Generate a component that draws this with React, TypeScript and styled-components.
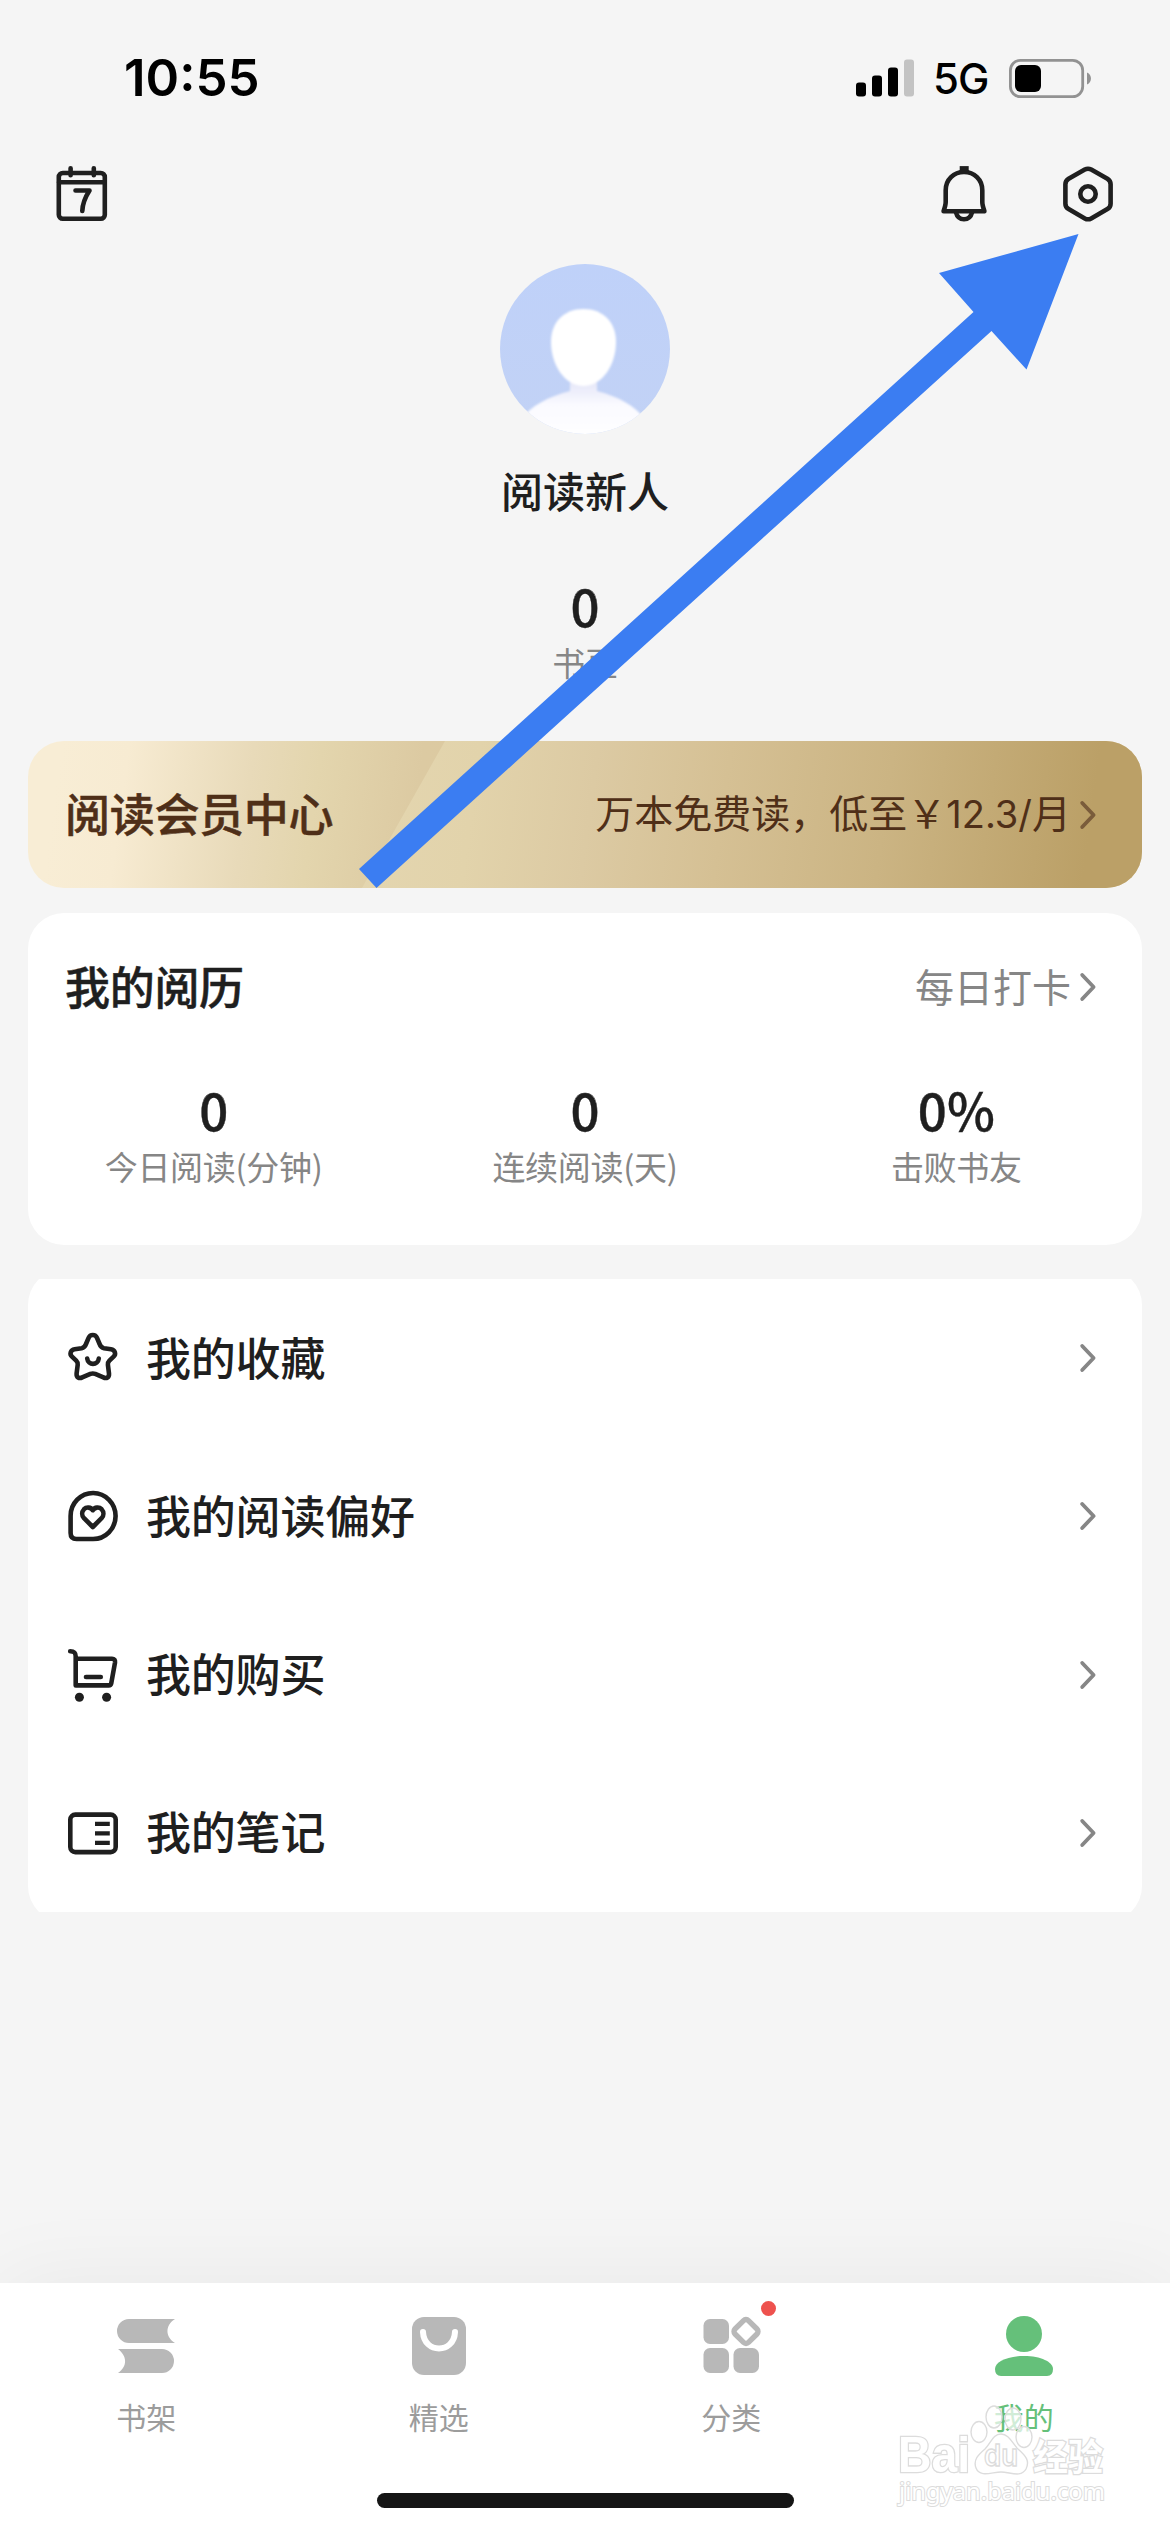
import React from 'react';
import styled, { createGlobalStyle } from 'styled-components';

const Global = createGlobalStyle`
  body { margin: 0; background: #f5f5f5; }
  * { box-sizing: border-box; }
`;

const INK = '#1f1f1f';

const Screen = styled.div`
  position: relative;
  width: 1170px;
  height: 2532px;
  overflow: hidden;
  display: flex;
  flex-direction: column;
  background: #f5f5f5;
  color: ${INK};
  font-family: 'Noto Sans CJK SC', sans-serif;
`;

const Svg = styled.svg`
  display: block;
  flex: none;
  overflow: visible;
`;

const StatusBar = styled.header`
  height: 156px;
  padding: 0 78px 0 124px;
  display: flex;
  align-items: center;
  justify-content: space-between;
  font-family: Inter, sans-serif;
  color: #000;
`;

const Clock = styled.time`
  font-size: 51px;
  font-weight: 600;
  line-height: 60px;
`;

const StatusGroup = styled.div`
  display: flex;
  align-items: center;
`;

const Network = styled.span`
  margin: 2px 20px 0 19px;
  width: 56px;
  font-size: 42px;
  font-weight: 500;
  line-height: 50px;
  letter-spacing: -1px;
`;

const Toolbar = styled.nav`
  height: 108px;
  padding: 10px 57px 0 56px;
  display: flex;
  justify-content: space-between;
`;

const ToolGroup = styled.div`
  display: flex;
  gap: 76px;
`;

const Profile = styled.section`
  height: 477px;
  display: flex;
  flex-direction: column;
  align-items: center;
`;

const Name = styled.h1`
  margin: 26px 0 0;
  font-size: 42px;
  font-weight: 500;
  line-height: 60px;
`;

const Stat = styled.div<{ $top?: number }>`
  margin-top: ${(p) => p.$top ?? 0}px;
  display: flex;
  flex-direction: column;
  align-items: center;
`;

const StatValue = styled.div`
  margin-bottom: 6px;
  font-size: 51px;
  font-weight: 500;
  line-height: 54px;
  -webkit-text-stroke: 0.4px currentColor;
`;

const StatLabel = styled.div`
  font-size: 33px;
  font-weight: 400;
  line-height: 48px;
  letter-spacing: -0.3px;
  color: #868686;
`;

const Banner = styled.section`
  position: relative;
  height: 147px;
  margin: 0 28px;
  padding: 0 46px 0 37px;
  border-radius: 36px;
  overflow: hidden;
  display: flex;
  align-items: center;
  justify-content: space-between;
  color: #4f2f18;
  background: linear-gradient(98deg, #f8edd5 3%, #f7ebd2 9%, #e8dab9 20%, #e3d5ad 26%, #dccaa2 35%, #dcc99f 42%);
`;

const BannerSheen = styled(Svg)`
  position: absolute;
  left: 0;
  top: 0;
`;

const SectionTitle = styled.h2`
  position: relative;
  margin: 0;
  padding-bottom: 3px;
  font-size: 45px;
  font-weight: 500;
  line-height: 60px;
  letter-spacing: -0.3px;
  -webkit-text-stroke: 0.5px currentColor;
`;

const More = styled.div<{ $color: string }>`
  position: relative;
  display: flex;
  align-items: center;
  gap: 9px;
  font-size: 39px;
  font-weight: 400;
  line-height: 56px;
  color: ${(p) => p.$color};
`;

const MoreText = styled.span`
  padding-bottom: 4px;
`;

const Price = styled.span`
  font-family: Inter, sans-serif;
  font-size: 38px;
`;

const Card = styled.section`
  height: 332px;
  margin: 25px 28px 34px;
  padding: 44px 46px 0 37px;
  border-radius: 36px;
  background: #fff;
`;

const CardHead = styled.div`
  display: flex;
  align-items: center;
  justify-content: space-between;
  height: 60px;
`;

const Stats = styled.div`
  display: grid;
  grid-template-columns: repeat(3, 1fr);
  margin: 65px -46px 0 -37px;
`;

const MenuClip = styled.div`
  height: 633px;
  margin: 0 28px;
  overflow: hidden;
`;

const Menu = styled.ul`
  list-style: none;
  margin: -10px 0;
  padding: 10px 0;
  border-radius: 36px;
  background: #fff;
`;

const MenuItem = styled.li`
  height: 158.25px;
  padding: 0 46px 0 39px;
  display: flex;
  align-items: center;
  gap: 26px;
`;

const MenuLabel = styled.span`
  flex: 1;
  padding-bottom: 3px;
  font-size: 45px;
  font-weight: 500;
  line-height: 60px;
  letter-spacing: -0.2px;
`;

const TabBar = styled.nav`
  position: relative;
  height: 249px;
  margin-top: auto;
  display: grid;
  grid-template-columns: repeat(4, 1fr);
  background: #fff;
  box-shadow: 0 0 90px rgba(0, 0, 0, 0.055);
`;

const Tab = styled.div<{ $active?: boolean }>`
  display: flex;
  flex-direction: column;
  align-items: center;
  padding-top: 30px;
  font-size: 30px;
  font-weight: 400;
  line-height: 44px;
  color: ${(p) => (p.$active ? '#65c07a' : '#9c9c9c')};
`;

const TabIcon = styled.div`
  position: relative;
  height: 81px;
`;

const Dot = styled.i`
  position: absolute;
  left: 60px;
  top: -12px;
  width: 15px;
  height: 15px;
  border-radius: 50%;
  background: #ee524e;
`;

const HomeBar = styled.div`
  position: absolute;
  left: 377px;
  bottom: 24px;
  width: 417px;
  height: 15px;
  border-radius: 8px;
  background: #151515;
`;

const Overlay = styled(Svg)`
  position: absolute;
  left: 0;
  top: 0;
  pointer-events: none;
`;

const Chevron = ({ color }: { color: string }) => (
  <Svg width="16" height="28" viewBox="0 0 16 28" fill="none" stroke={color} strokeWidth="3.8" strokeLinecap="round" strokeLinejoin="round">
    <path d="M2.200 2 L13.600 14 L2.200 26" />
  </Svg>
);

const line = { fill: 'none', stroke: INK, strokeWidth: 4.6, strokeLinecap: 'round', strokeLinejoin: 'round' } as const;

const CalendarIcon = () => (
  <Svg width="52" height="56" viewBox="0 0 52 56" {...line}>
    <rect x="2.8" y="7" width="46" height="45.8" rx="4" />
    <path d="M3 16.3H48.6M14.6 2.3V9.3M37.8 2.3V9.3" />
    <path d="M19.5 24.5H33.5C29 31.5 26.5 37.5 26.3 45" />
  </Svg>
);

const BellIcon = () => (
  <Svg width="46" height="56" viewBox="0 0 46 56" {...line}>
    <path d="M18.7 2.6H27.7" strokeLinecap="butt" strokeWidth="5" />
    <path d="M2.6 45.2C4 41 4.7 39 4.7 36V24.2C4.7 13.4 12.8 6 23 6C33.2 6 41.3 13.4 41.3 24.2V36C41.3 39 42 41 43.4 45.2Z" />
    <path d="M15 46.5C16 50.6 19 53.2 23 53.2C27 53.2 30 50.6 31 46.5" />
  </Svg>
);

const HexIcon = () => (
  <Svg width="50" height="56" viewBox="0 0 50 56" {...line}>
    <path d="M21.8 3.6Q25 1.8 28.2 3.6L44.4 12.8Q47.6 14.8 47.6 18.3V37.7Q47.6 41.2 44.4 43.1L28.2 52.4Q25 54.2 21.8 52.4L5.6 43.1Q2.4 41.2 2.4 37.7V18.3Q2.4 14.8 5.6 12.8Z" />
    <circle cx="25" cy="28" r="7.7" />
  </Svg>
);

const StarIcon = () => (
  <Svg width="53" height="56" viewBox="0 0 53 56" {...line}>
    <path d="M21.6 7.8C23.2 4 28.4 4 30 7.8L32.6 14Q33.8 17.6 37 18.2L44 19.2C48 19.8 49.4 24 46.6 26.6L42.4 30.6Q40.6 32.4 40.9 34.8L42 43.6C42.3 47.3 39.5 49 36.4 47.4L28.2 43.9Q25.8 43 23.4 43.9L15.2 47.4C12.1 49 9.3 47.3 9.6 43.6L10.7 34.8Q11 32.4 9.2 30.6L5 26.6C2.2 24 3.6 19.8 7.6 19.2L14.6 18.2Q17.8 17.6 19 14Z" />
    <path d="M20.2 28.6C21 35.6 31 35.6 31.8 28.600" />
  </Svg>
);

const HeartIcon = () => (
  <Svg width="53" height="56" viewBox="0 0 53 56" {...line}>
    <path d="M3.6 28A22.500 23 0 1 1 26 51H9.5Q3.6 51 3.600 45Z" />
    <path d="M25.800 22.2C23.800 19 19.4 18.8 17 21.200C14.6 23.8 14.6 27.6 17 30.2L25.800 39L34.600 30.2C37 27.6 37 23.8 34.600 21.200C32.200 18.8 27.800 19 25.800 22.2Z" />
  </Svg>
);

const CartIcon = () => (
  <Svg width="53" height="56" viewBox="0 0 53 56" {...line}>
    <path d="M3.2 4.200C7 4.200 8.7 5.6 8.700 9.6V38.400H41.800Q43.800 38.400 44.200 36.6L48 15.6Q48.4 11.700 45 11.700H9" />
    <path d="M19 30H33.8" />
    <g fill={INK} stroke="none">
      <circle cx="12.4" cy="50.2" r="4.5" />
      <circle cx="39.600" cy="50.2" r="4.5" />
    </g>
  </Svg>
);

const NoteIcon = () => (
  <Svg width="53" height="56" viewBox="0 0 53 56" {...line}>
    <rect x="3.300" y="9.600" width="45.400" height="37.500" rx="5" />
    <path d="M28 18.900H42.800M28 28.400H42.800M28 37.900H42.800" strokeWidth="4.2" strokeLinecap="butt" />
  </Svg>
);

const BooksIcon = () => (
  <Svg width="60" height="60" viewBox="0 0 60 60" fill="#b8b8b8">
    <path d="M13 6H59C49 12 49 24 59 30H13A12 12 0 0 1 13 6Z" />
    <path d="M2 36H46A12 12 0 0 1 46 60H2C12 53 11 43 2 36Z" />
  </Svg>
);

const BagIcon = () => (
  <Svg width="60" height="60" viewBox="0 0 60 60">
    <rect x="3" y="4" width="54" height="58" rx="12" fill="#b8b8b8" />
    <path d="M14 19C15 41 45 41 46 19" fill="none" stroke="#fff" strokeWidth="6" strokeLinecap="round" />
  </Svg>
);

const GridIcon = () => (
  <Svg width="60" height="60" viewBox="0 0 60 60" fill="#b8b8b8">
    <rect x="2.5" y="6" width="25.5" height="25" rx="6.5" />
    <rect x="2.5" y="35" width="25.5" height="25" rx="6.5" />
    <rect x="32.5" y="35" width="25.5" height="25" rx="6.5" />
    <rect x="35.5" y="9" width="19" height="19" rx="3.5" transform="rotate(45 45 18.5)" fill="none" stroke="#b8b8b8" strokeWidth="5.4" />
  </Svg>
);

const PersonIcon = () => (
  <Svg width="60" height="60" viewBox="0 0 60 60" fill="#65c07a">
    <circle cx="30" cy="21" r="18" />
    <path d="M1 56C1 49 13 43 30 43C47 43 59 49 59 56Q59 63 53 63H7Q1 63 1 56Z" />
  </Svg>
);

const Avatar = () => (
  <Svg width="170" height="170" viewBox="0 0 170 170">
    <defs>
      <clipPath id="avatarClip"><circle cx="85" cy="85" r="85" /></clipPath>
      <linearGradient id="body" x1="0" y1="0" x2="0" y2="1">
        <stop offset="0" stopColor="#dfe1f6" />
        <stop offset="0.45" stopColor="#fafaff" />
        <stop offset="1" stopColor="#fff" />
      </linearGradient>
      <linearGradient id="sky" x1="0" y1="0" x2="0" y2="1">
        <stop offset="0" stopColor="#bfd1f9" />
        <stop offset="1" stopColor="#c2d2f5" />
      </linearGradient>
      <filter id="soft"><feGaussianBlur stdDeviation="1" /></filter>
    </defs>
    <g clipPath="url(#avatarClip)">
      <rect width="170" height="170" fill="url(#sky)" />
      <g filter="url(#soft)">
        <path d="M20 156C32 141 48 133 70 127V112H97V127C119 133 134 141 146 156L150 175H16Z" fill="url(#body)" />
        <path d="M83.500 45C103 45 116 58 116 78C116 101 102 122 83.500 122C65 122 51 101 51 78C51 58 64 45 83.500 45Z" fill="#fff" />
      </g>
    </g>
  </Svg>
);

const menu = [
  { icon: <StarIcon />, label: '我的收藏' },
  { icon: <HeartIcon />, label: '我的阅读偏好' },
  { icon: <CartIcon />, label: '我的购买' },
  { icon: <NoteIcon />, label: '我的笔记' },
];

const stats = [
  { value: '0', label: '今日阅读(分钟)' },
  { value: '0', label: '连续阅读(天)' },
  { value: '0%', label: '击败书友' },
];

const tabs = [
  { icon: <BooksIcon />, label: '书架' },
  { icon: <BagIcon />, label: '精选' },
  { icon: <GridIcon />, label: '分类', dot: true },
  { icon: <PersonIcon />, label: '我的', active: true },
];

const Watermark = () => (
  <Svg width="216" height="110" viewBox="0 0 216 110" fill="#fff" fillOpacity="0.7" stroke="#dcdcdc" strokeWidth="1.4">
    <g fontFamily="'Liberation Sans', sans-serif" fontWeight="700" paintOrder="stroke" fillOpacity="1" strokeWidth="2.6">
      <text x="2" y="70" fontSize="50" textLength="72" lengthAdjust="spacingAndGlyphs">Bai</text>
      <text x="137" y="69" fontSize="37" fontFamily="'Noto Sans CJK SC', sans-serif" textLength="70" lengthAdjust="spacingAndGlyphs">经验</text>
    </g>
    <ellipse cx="83" cy="30" rx="8" ry="10.500" />
    <ellipse cx="98" cy="15" rx="8" ry="11" />
    <ellipse cx="117" cy="17" rx="8" ry="11" />
    <ellipse cx="128" cy="35" rx="8" ry="10.500" />
    <path d="M105 32C113 32 116 41 122 47C130 54 134 59 130 67C125 76 114 70 105 70C96 70 84 76 80 66C77 58 82 53 89 47C95 41 97 32 105 32Z" />
    <text x="88" y="64" fontSize="30" fontFamily="Inter, sans-serif" fontWeight="600" textLength="34" lengthAdjust="spacingAndGlyphs">du</text>
    <text x="3" y="98" fontSize="24" fontFamily="'Noto Sans', sans-serif" fontWeight="400" fillOpacity="1" paintOrder="stroke" strokeWidth="2" textLength="206" lengthAdjust="spacingAndGlyphs">jingyan.baidu.com</text>
  </Svg>
);

const WatermarkSlot = styled.aside`
  position: absolute;
  left: 896px;
  top: 2402px;
`;

export default function App() {
  return (
    <Screen>
      <Global />
      <StatusBar>
        <Clock>10:55</Clock>
        <StatusGroup>
          <Svg width="58" height="38" viewBox="0 0 58 38">
            <rect x="0" y="23.500" width="10" height="14" rx="3" />
            <rect x="16" y="16.500" width="10" height="21" rx="3" />
            <rect x="32" y="8.500" width="10" height="29" rx="3" />
            <rect x="48" y="0.500" width="10" height="37" rx="3" fill="#c3c3c3" />
          </Svg>
          <Network>5G</Network>
          <Svg width="83" height="39" viewBox="0 0 83 39">
            <rect x="1.400" y="1.400" width="72.300" height="36.200" rx="10" fill="none" stroke="#929292" strokeWidth="2.800" />
            <rect x="6" y="6" width="26" height="27" rx="6" />
            <path d="M78 13.500C83.300 15.500 83.300 23.500 78 25.500Z" fill="#929292" />
          </Svg>
        </StatusGroup>
      </StatusBar>

      <Toolbar>
        <CalendarIcon />
        <ToolGroup>
          <BellIcon />
          <HexIcon />
        </ToolGroup>
      </Toolbar>

      <Profile>
        <Avatar />
        <Name>阅读新人</Name>
        <Stat $top={58}>
          <StatValue>0</StatValue>
          <StatLabel>书豆</StatLabel>
        </Stat>
      </Profile>

      <Banner>
        <BannerSheen width="1114" height="147" viewBox="0 0 1114 147">
          <defs>
            <linearGradient id="sheen" gradientUnits="userSpaceOnUse" x1="335" y1="0" x2="1060" y2="100">
              <stop offset="0" stopColor="#e4d6b0" />
              <stop offset="0.16" stopColor="#e2d3ab" />
              <stop offset="0.32" stopColor="#dccaa3" />
              <stop offset="0.5" stopColor="#d5c094" />
              <stop offset="0.72" stopColor="#cbb483" />
              <stop offset="1" stopColor="#bba067" />
            </linearGradient>
          </defs>
          <path d="M417 0H1114V147H334Z" fill="url(#sheen)" />
        </BannerSheen>
        <SectionTitle>阅读会员中心</SectionTitle>
        <More $color="#4f2f18">
          <MoreText>万本免费读，低至￥<Price>12.3/</Price>月</MoreText>
          <Chevron color="#7a5c3b" />
        </More>
      </Banner>

      <Card>
        <CardHead>
          <SectionTitle>我的阅历</SectionTitle>
          <More $color="#868686">
            <MoreText>每日打卡</MoreText>
            <Chevron color="#868686" />
          </More>
        </CardHead>
        <Stats>
          {stats.map((s) => (
            <Stat key={s.label}>
              <StatValue>{s.value}</StatValue>
              <StatLabel>{s.label}</StatLabel>
            </Stat>
          ))}
        </Stats>
      </Card>

      <MenuClip>
        <Menu>
          {menu.map((m) => (
            <MenuItem key={m.label}>
              {m.icon}
              <MenuLabel>{m.label}</MenuLabel>
              <Chevron color="#868686" />
            </MenuItem>
          ))}
        </Menu>
      </MenuClip>

      <TabBar>
        {tabs.map((t) => (
          <Tab key={t.label} $active={t.active}>
            <TabIcon>
              {t.icon}
              {t.dot && <Dot />}
            </TabIcon>
            <span>{t.label}</span>
          </Tab>
        ))}
        <HomeBar />
      </TabBar>

      <Overlay width="1170" height="900" viewBox="0 0 1170 900">
        <polygon points="1078.500,234 939,273 973.500,312 359,869 376.500,888 991.500,331 1026.500,369.500" fill="#3b7df2" />
      </Overlay>
      <WatermarkSlot>
        <Watermark />
      </WatermarkSlot>
    </Screen>
  );
}
